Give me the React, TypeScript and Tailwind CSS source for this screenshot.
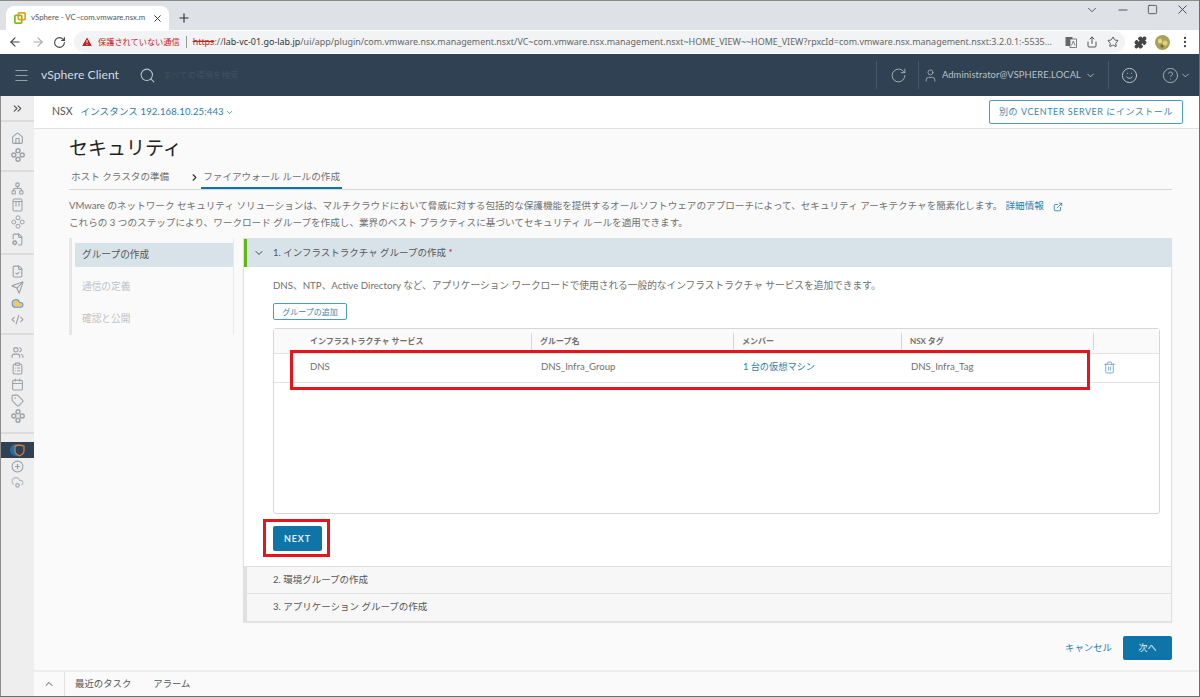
import {
  ArrowLeft,
  ArrowRight,
  RotateCw,
  TriangleAlert,
  Share,
  Star,
  Puzzle,
  EllipsisVertical,
  ChevronDown,
  ChevronRight,
  ChevronUp,
  ChevronsRight,
  Minus,
  Square,
  X,
  Plus,
  Search,
  User,
  Smile,
  CircleHelp,
  Menu,
  Home,
  Network,
  FileCog,
  FileCheck,
  Send,
  Cloud,
  CodeXml,
  Users,
  ClipboardList,
  Calendar,
  Tag,
  CirclePlus,
  CloudCog,
  Trash2,
  ExternalLink,
} from "lucide-react";

const font = "font-['Lato','Noto_Sans_CJK_JP',sans-serif]";

function DiamondIcon({ filled }: { filled?: boolean }) {
  return (
    <svg width="14" height="14" viewBox="0 0 14 14" fill="none" stroke="#9aa1a7" strokeWidth={filled ? 1.4 : 1}>
      <circle cx="7" cy="2.8" r="2" />
      <circle cx="7" cy="11.2" r="2" />
      <circle cx="2.8" cy="7" r="2" />
      <circle cx="11.2" cy="7" r="2" />
    </svg>
  );
}

function StorageIcon() {
  return (
    <svg width="13" height="14" viewBox="0 0 13 14" fill="none" stroke="#9aa1a7" strokeWidth="1">
      <rect x="2" y="1" width="9" height="12" rx="1" />
      <path d="M2 3.500h9M5 3.500v5M8 3.500v5" />
    </svg>
  );
}

function TranslateIcon() {
  return (
    <svg width="12" height="12" viewBox="0 0 12 12">
      <rect x="0.500" y="1" width="7" height="9" fill="#666" />
      <rect x="5" y="3" width="6.500" height="8.500" fill="#f1f3f4" stroke="#666" strokeWidth="0.800" />
      <path d="M6.500 9.500l1.800-4.500 1.800 4.500" fill="none" stroke="#666" strokeWidth="0.800" />
    </svg>
  );
}

function SideIcon({ children }: { children: React.ReactNode }) {
  return <div className="flex h-4 w-full items-center justify-center">{children}</div>;
}

const ic = "h-[13px] w-[13px] text-[#9aa1a7]";
const group = "flex flex-col border-b-2 border-[#dcdcdc]";

function Sidebar() {
  return (
    <div className="flex w-[34px] shrink-0 flex-col border-l border-[#8c8c8c] bg-[#eeeeee]">
      <div className="flex h-[26px] items-center justify-center border-b-2 border-[#dcdcdc]">
        <ChevronsRight className="h-[13px] w-[13px] text-[#555]" />
      </div>
      <div className={`${group} h-[50px] gap-[1px] pt-[8px]`}>
        <SideIcon><Home className={ic} /></SideIcon>
        <SideIcon><DiamondIcon filled /></SideIcon>
      </div>
      <div className={`${group} h-[83px] gap-[1px] pt-[8px]`}>
        <SideIcon><Network className={ic} /></SideIcon>
        <SideIcon><StorageIcon /></SideIcon>
        <SideIcon><DiamondIcon /></SideIcon>
        <SideIcon><FileCog className={ic} /></SideIcon>
      </div>
      <div className={`${group} h-[80px] pt-[8px]`}>
        <SideIcon><FileCheck className={ic} /></SideIcon>
        <SideIcon><Send className={ic} /></SideIcon>
        <SideIcon><Cloud className="h-[13px] w-[13px] fill-[#f2c66d] text-[#5b9bd5]" /></SideIcon>
        <SideIcon><CodeXml className={ic} /></SideIcon>
      </div>
      <div className={`${group} h-[99px] pt-[9px]`}>
        <SideIcon><Users className={ic} /></SideIcon>
        <SideIcon><ClipboardList className={ic} /></SideIcon>
        <SideIcon><Calendar className={ic} /></SideIcon>
        <SideIcon><Tag className={ic} /></SideIcon>
        <SideIcon><DiamondIcon filled /></SideIcon>
      </div>
      <div className="mt-[8px] flex flex-col">
        <div className="flex h-4 w-full items-center justify-center bg-[#2f4152]">
          <svg width="16" height="14" viewBox="0 0 16 14">
            <circle cx="6" cy="7" r="6" fill="#1f6fa8" />
            <path d="M5 3l4.500-1L14 3v5c0 2.500-2.500 4-4.500 5C7.500 12 5 10.500 5 8z" fill="#2f4152" stroke="#d9773a" strokeWidth="1.300" />
          </svg>
        </div>
        <SideIcon><CirclePlus className={ic} /></SideIcon>
        <SideIcon><CloudCog className="h-[13px] w-[13px] text-[#b4b8bc]" /></SideIcon>
      </div>
    </div>
  );
}

function BrowserChrome() {
  return (
    <div className="shrink-0 font-['Noto_Sans','Noto_Sans_CJK_JP',sans-serif]">
      <div className="flex h-[30px] items-end border-t border-[#8c8c8c] bg-[#dee1e6] pl-[6px]">
        <div className="flex h-[24px] w-[163px] items-center rounded-t-lg bg-white pl-[8px] pr-[6px]">
          <svg width="12" height="12" viewBox="0 0 14 14" fill="none" className="shrink-0">
            <rect x="1" y="4" width="8" height="9" rx="1" stroke="#78be20" strokeWidth="2" />
            <rect x="5" y="1" width="8" height="8" rx="1" stroke="#e8a020" strokeWidth="2" />
          </svg>
          <span className="ml-[5px] whitespace-nowrap font-['Lato',sans-serif] text-[7.8px] leading-none text-[#555]">
            vSphere - VC~com.vmware.nsx.m
          </span>
          <X className="ml-auto h-[11px] w-[11px] text-[#333]" />
        </div>
        <Plus className="mb-[5px] ml-[8px] h-[14px] w-[14px] text-[#333]" />
        <div className="mb-[13px] ml-auto flex items-center gap-[17px] pr-[9px] text-[#444]">
          <ChevronDown className="h-[14px] w-[14px]" strokeWidth={1.5} />
          <Minus className="h-[14px] w-[14px]" strokeWidth={1.5} />
          <Square className="h-[11px] w-[11px]" strokeWidth={1.8} />
          <X className="h-[15px] w-[15px]" strokeWidth={1.5} />
        </div>
      </div>
      <div className="flex h-[24px] items-center bg-white pl-[8px]">
        <ArrowLeft className="h-[14px] w-[14px] text-[#444]" />
        <ArrowRight className="ml-[9px] h-[14px] w-[14px] text-[#aaa]" />
        <RotateCw className="ml-[8px] h-[13px] w-[13px] text-[#444]" />
        <div className="ml-[8px] flex h-[22px] w-[1051px] items-center rounded-full bg-[#f1f3f4] pl-[7px] pr-[6px]">
          <TriangleAlert className="h-[12px] w-[12px] fill-[#c5221f] text-white" />
          <span className="ml-[5px] whitespace-nowrap text-[8.2px] text-[#c5221f]">保護されていない通信</span>
          <span className="ml-[6px] h-[12px] w-px bg-[#999]" />
          <span className="ml-[6px] whitespace-nowrap text-[8.95px] leading-none text-[#333]">
            <span className="text-[#c5221f] line-through">https</span>
            <span className="text-[#666]">://</span>
            lab-vc-01.go-lab.jp
            <span className="text-[#666]">/ui/app/plugin/com.vmware.nsx.management.nsxt/VC~com.vmware.nsx.management.nsxt~HOME_VIEW~~HOME_VIEW?rpxcId=com.vmware.nsx.management.nsxt:3.2.0.1:-5535...</span>
          </span>
          <div className="ml-auto flex items-center gap-[9px] text-[#555]">
            <TranslateIcon />
            <Share className="h-[12px] w-[12px]" />
            <Star className="h-[12px] w-[12px]" />
          </div>
        </div>
        <Puzzle className="ml-[9px] h-[13px] w-[13px] fill-[#444] text-[#444]" />
        <svg width="15" height="15" viewBox="0 0 15 15" className="ml-[8px]">
          <circle cx="7.500" cy="7.500" r="7.500" fill="#a8a25a" />
          <circle cx="5" cy="6" r="2.200" fill="#e8d88a" />
          <circle cx="10" cy="8" r="2.500" fill="#e3cf78" />
          <circle cx="7" cy="11" r="1.500" fill="#6b6a35" />
        </svg>
        <EllipsisVertical className="ml-[8px] h-[14px] w-[14px] text-[#444]" />
      </div>
    </div>
  );
}

function TopHeader() {
  return (
    <div className={`flex h-[42px] shrink-0 items-center bg-[#2f4152] text-[#d5dbe0] ${font}`}>
      <Menu className="ml-[13px] h-[17px] w-[17px] text-[#8fa0ad]" strokeWidth={1.5} />
      <span className="ml-[11px] text-[12.2px]">vSphere Client</span>
      <Search className="ml-[20px] h-[17px] w-[17px] text-[#b8c2c9]" strokeWidth={1.5} />
      <span className="ml-[7px] text-[8.5px] text-[#3f5162]">すべての環境を検索</span>
      <div className="ml-auto h-[28px] w-px bg-[#45586a]" />
      <RotateCw className="ml-[13px] h-[17px] w-[17px] text-[#a9b5be]" strokeWidth={1.3} />
      <div className="ml-[11px] h-[28px] w-px bg-[#45586a]" />
      <User className="ml-[4px] h-[15px] w-[15px] text-[#a9b5be]" strokeWidth={1.3} />
      <span className="ml-[4px] text-[9.4px] tracking-[0.01em] text-[#b8c2c9]">Administrator@VSPHERE.LOCAL</span>
      <ChevronDown className="ml-[4px] h-[11px] w-[11px] text-[#b8c2c9]" />
      <div className="ml-[12px] h-[28px] w-px bg-[#45586a]" />
      <Smile className="ml-[12px] h-[17px] w-[17px] text-[#c5ced5]" strokeWidth={1.3} />
      <CircleHelp className="ml-[24px] h-[17px] w-[17px] text-[#a9b5be]" strokeWidth={1.3} />
      <ChevronDown className="ml-[1px] mr-[8px] h-[11px] w-[11px] text-[#a9b5be]" />
    </div>
  );
}

function Table() {
  return (
    <div className="relative flex h-[186px] flex-col rounded-[3px] border border-[#d7d7d7] bg-white">
      <div className="flex h-[25px] items-center border-b border-[#e3e3e3] bg-[#fafafa] text-[8px] font-bold text-[#707070]">
        <div className="flex h-[17px] w-[258px] items-center border-r border-[#d7d7d7] pl-[36px]">インフラストラクチャ サービス</div>
        <div className="flex h-[17px] w-[202px] items-center border-r border-[#d7d7d7] pl-[8px]">グループ名</div>
        <div className="flex h-[17px] w-[168px] items-center border-r border-[#d7d7d7] pl-[8px]">メンバー</div>
        <div className="flex h-[17px] w-[192px] items-center border-r border-[#d7d7d7] pl-[8px]">NSX タグ</div>
      </div>
      <div className="flex h-[29px] items-center border-b border-[#e3e3e3] pb-[2px] text-[9.6px] text-[#707070]">
        <div className="w-[258px] pl-[36px]">DNS</div>
        <div className="w-[202px] pl-[9px]">DNS_Infra_Group</div>
        <div className="w-[168px] pl-[9px] text-[9.2px] text-[#2b7ea8]">1 台の仮想マシン</div>
        <div className="w-[192px] pl-[9px]">DNS_Infra_Tag</div>
        <Trash2 className="ml-[9px] h-[13px] w-[13px] text-[#5f9fc2]" strokeWidth={1.5} />
      </div>
      {/* red annotation */}
      <div className="absolute left-[16px] top-[21px] h-[40px] w-[800px] border-[3px] border-[#e8141c]" />
    </div>
  );
}

function Accordion() {
  return (
    <div className="flex h-[384px] flex-1 flex-col border border-[#e0e0e0] bg-white shadow-[0_1px_1px_rgba(0,0,0,0.08)]">
      <div className="flex h-[28px] shrink-0 items-center border-l-[3px] border-[#60b515] bg-[#d8e3e9] text-[#565656]">
        <ChevronDown className="ml-[6px] h-[12px] w-[12px] text-[#444]" />
        <span className="ml-[8px] text-[9.5px]">1. インフラストラクチャ グループの作成 <span className="text-[#c92100]">*</span></span>
      </div>
      <div className="relative flex flex-1 flex-col pl-[29px] pr-[11px]">
        <p className="mt-[10px] text-[9.7px] leading-[16px] text-[#707070]">
          DNS、NTP、Active Directory など、アプリケーション ワークロードで使用される一般的なインフラストラクチャ サービスを追加できます。
        </p>
        <button className="mt-[10px] flex h-[17px] w-[74px] items-center justify-center rounded-[2px] border border-[#4a9cc4] bg-white text-[8px] text-[#3a86ad]">
          グループの追加
        </button>
        <div className="mt-[8px]">
          <Table />
        </div>
        <div className="mt-[12px] flex">
          <button className="flex h-[25px] w-[49px] items-center justify-center rounded-[2px] bg-[#0f75a8] text-[9px] font-bold tracking-[0.1em] text-[#e4eff5]">
            NEXT
          </button>
        </div>
        {/* red annotation */}
        <div className="absolute bottom-[9px] left-[19px] h-[38px] w-[67px] border-[3px] border-[#e8141c]" />
      </div>
      <div className="flex h-[28px] shrink-0 items-center border-b border-l-[3px] border-t border-[#e0e0e0] bg-[#f7f7f7] pl-[26px] text-[9.5px] text-[#565656]">
        2. 環境グループの作成
      </div>
      <div className="flex h-[27px] shrink-0 items-center border-l-[3px] border-[#e0e0e0] bg-[#f7f7f7] pl-[26px] text-[9.5px] text-[#565656]">
        3. アプリケーション グループの作成
      </div>
    </div>
  );
}

function Content() {
  return (
    <div className={`flex min-w-0 flex-1 flex-col bg-[#fafafa] ${font}`}>
      <div className="flex h-[33px] shrink-0 items-center justify-between border-b border-[#e2e2e2] bg-white pl-[18px] pr-[16px]">
        <div className="flex items-center">
          <span className="text-[10.5px] text-[#565656]">NSX</span>
          <span className="ml-[8px] text-[9.5px] tracking-[0.015em] text-[#2b7ea8]">インスタンス 192.168.10.25:443</span>
          <ChevronDown className="ml-[1px] h-[9px] w-[9px] text-[#2b7ea8]" />
        </div>
        <button className="flex h-[24px] w-[194px] items-center justify-center rounded-[2px] border border-[#4a9cc4] bg-white text-[9px] tracking-[0.06em] text-[#3a86ad]">
          別の VCENTER SERVER にインストール
        </button>
      </div>

      <div className="flex flex-1 flex-col pl-[35px] pr-[27px]">
        <h1 className="mt-[6px] text-[19px] leading-[26px] text-[#222]">セキュリティ</h1>
        <div className="mt-[5px] flex h-[24px] items-center border-b border-[#d7d7d7] text-[9.6px] text-[#707070]">
          <span className="ml-[2px]">ホスト クラスタの準備</span>
          <ChevronRight className="ml-[20px] h-[11px] w-[11px] text-[#333]" strokeWidth={2.5} />
          <span className="ml-[1px] flex h-full items-center border-b-2 border-[#0f75a8] px-[2px] pt-[2px]">
            ファイアウォール ルールの作成
          </span>
        </div>
        <p className="mt-[7px] whitespace-nowrap text-[9.6px] leading-[17px] text-[#707070]">
          VMware のネットワーク セキュリティ ソリューションは、マルチクラウドにおいて脅威に対する包括的な保護機能を提供するオールソフトウェアのアプローチによって、セキュリティ アーキテクチャを簡素化します。
          <span className="ml-[3px] text-[#2b7ea8]">詳細情報</span>
          <ExternalLink className="ml-[9px] inline h-[10px] w-[10px] text-[#2b7ea8]" />
          <br />
          これらの 3 つのステップにより、ワークロード グループを作成し、業界のベスト プラクティスに基づいてセキュリティ ルールを適用できます。
        </p>
        <div className="mt-[7px] flex items-start gap-[9px]">
          <div className="flex h-[97px] w-[165px] shrink-0 flex-col border-l-[3px] border-r border-l-[#e6e6e6] border-r-[#eaeaea] pl-[3px] pt-[5px] text-[9.7px]">
            <div className="flex h-[24px] items-center bg-[#d8e3e9] pb-[1px] pl-[7px] text-[#565656]">グループの作成</div>
            <div className="mt-[8px] flex h-[24px] items-center pb-[1px] pl-[7px] text-[#c2c2c2]">通信の定義</div>
            <div className="mt-[8px] flex h-[24px] items-center pb-[1px] pl-[7px] text-[#c2c2c2]">確認と公開</div>
          </div>
          <Accordion />
        </div>
        <div className="mt-[14px] flex items-center justify-end">
          <span className="text-[9.4px] text-[#2b7ea8]">キャンセル</span>
          <button className="ml-[11px] flex h-[24px] w-[49px] items-center justify-center rounded-[2px] bg-[#0f75a8] text-[9px] text-[#e4eff5]">
            次へ
          </button>
        </div>
      </div>
    </div>
  );
}

export default function App() {
  return (
    <div className="flex h-[697px] w-[1200px] flex-col overflow-hidden border-b border-r border-[#6e6e6e] bg-white">
      <BrowserChrome />
      <TopHeader />
      <div className="flex min-h-0 flex-1">
        <Sidebar />
        <div className="flex min-w-0 flex-1 flex-col">
          <Content />
          <div className={`flex h-[26px] shrink-0 items-center border-t-2 border-[#eeeeee] bg-[#fafafa] text-[9.4px] text-[#565656] ${font}`}>
            <div className="flex h-full w-[31px] items-center justify-center border-r border-[#e2e2e2]">
              <ChevronUp className="h-[12px] w-[12px]" />
            </div>
            <span className="ml-[10px]">最近のタスク</span>
            <span className="ml-[22px]">アラーム</span>
          </div>
        </div>
      </div>
    </div>
  );
}
